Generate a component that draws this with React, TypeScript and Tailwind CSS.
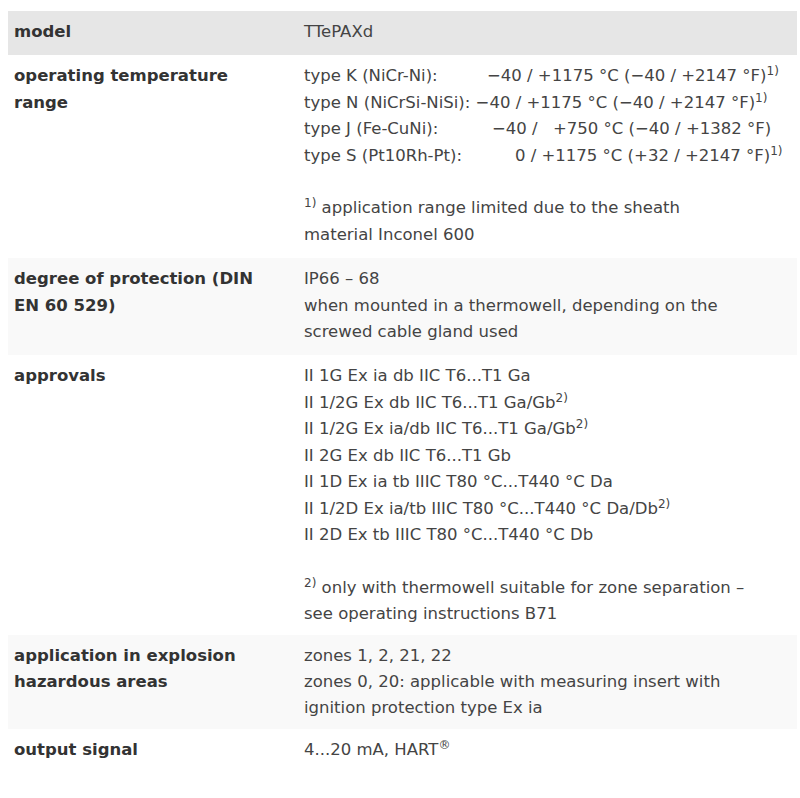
import React from "react";

const Sup = ({ children }: { children: React.ReactNode }) => (
  <sup className="text-[12px]">{children}</sup>
);

function Row({
  label,
  children,
  bg,
  pb = "pb-[10px]",
}: {
  label: React.ReactNode;
  children: React.ReactNode;
  bg: string;
  pb?: string;
}) {
  return (
    <div className={`flex pt-2 ${pb} ${bg}`}>
      <div className="w-[290px] shrink-0 pl-[6px] font-bold text-[#333333]">{label}</div>
      <div className="pl-[6px] text-[#444444] whitespace-nowrap">{children}</div>
    </div>
  );
}

export default function App() {
  return (
    <div
      className="min-h-[798px] bg-white pt-[11px]"
      style={{ fontFamily: '"DejaVu Sans", sans-serif' }}
    >
      <div className="ml-2 w-[789px] text-[16.5px] leading-[26.4px]">
        <Row label="model" bg="bg-[#e6e6e6]">
          TTePAXd
        </Row>
        <Row
          label={
            <>
              operating temperature
              <br />
              range
            </>
          }
          bg="bg-white"
        >
          <div>
            <span className="inline-block w-[183px]">type K (NiCr-Ni):</span>−40 / +1175 °C (−40 / +2147 °F)
            <Sup>1)</Sup>
          </div>
          <div>
            type N (NiCrSi-NiSi): −40 / +1175 °C (−40 / +2147 °F)<Sup>1)</Sup>
          </div>
          <div>
            <span className="inline-block w-[188px]">type J (Fe-CuNi):</span>
            <span className="inline-block w-[61px]">−40 /</span>+750 °C (−40 / +1382 °F)
          </div>
          <div>
            <span className="inline-block w-[211px]">type S (Pt10Rh-Pt):</span>0 / +1175 °C (+32 / +2147 °F)
            <Sup>1)</Sup>
          </div>
          <div>&nbsp;</div>
          <div>
            <Sup>1)</Sup> application range limited due to the sheath
          </div>
          <div>material Inconel 600</div>
        </Row>
        <Row
          label={
            <>
              degree of protection (DIN
              <br />
              EN 60 529)
            </>
          }
          bg="bg-[#f9f9f9]"
        >
          <div>IP66 – 68</div>
          <div>when mounted in a thermowell, depending on the</div>
          <div>screwed cable gland used</div>
        </Row>
        <Row label="approvals" bg="bg-white" pb="pb-[7px]">
          <div>II 1G Ex ia db IIC T6...T1 Ga</div>
          <div>
            II 1/2G Ex db IIC T6...T1 Ga/Gb<Sup>2)</Sup>
          </div>
          <div>
            II 1/2G Ex ia/db IIC T6...T1 Ga/Gb<Sup>2)</Sup>
          </div>
          <div>II 2G Ex db IIC T6...T1 Gb</div>
          <div>II 1D Ex ia tb IIIC T80 °C...T440 °C Da</div>
          <div>
            II 1/2D Ex ia/tb IIIC T80 °C...T440 °C Da/Db<Sup>2)</Sup>
          </div>
          <div>II 2D Ex tb IIIC T80 °C...T440 °C Db</div>
          <div>&nbsp;</div>
          <div>
            <Sup>2)</Sup> only with thermowell suitable for zone separation –
          </div>
          <div>see operating instructions B71</div>
        </Row>
        <Row
          label={
            <>
              application in explosion
              <br />
              hazardous areas
            </>
          }
          bg="bg-[#f9f9f9]"
          pb="pb-[7px]"
        >
          <div>zones 1, 2, 21, 22</div>
          <div>zones 0, 20: applicable with measuring insert with</div>
          <div>ignition protection type Ex ia</div>
        </Row>
        <Row label="output signal" bg="bg-white">
          <div>
            4...20 mA, HART<Sup>®</Sup>
          </div>
        </Row>
      </div>
    </div>
  );
}
